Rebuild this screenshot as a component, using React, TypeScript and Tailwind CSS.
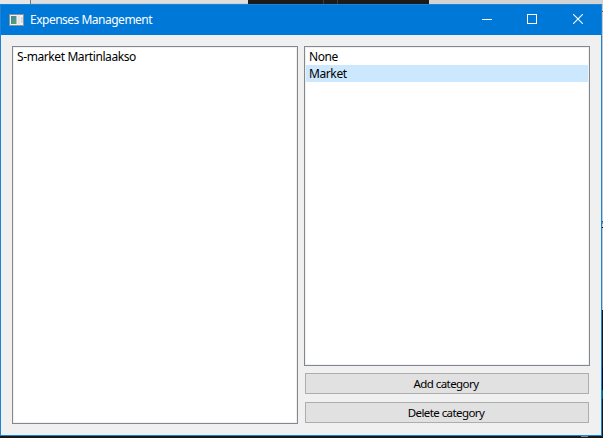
import type { ReactNode } from 'react';

function WindowIcon() {
  return (
    <svg width="16" height="13" viewBox="0 0 16 13" shapeRendering="crispEdges">
      <defs>
        <linearGradient id="pane" x1="0" y1="0" x2="0.6" y2="1">
          <stop offset="0" stopColor="#4a80a8" />
          <stop offset="1" stopColor="#55a070" />
        </linearGradient>
      </defs>
      <rect width="15" height="12" fill="#8596a3" />
      <rect x="1" y="1" width="13" height="10" fill="#eef1f3" />
      <rect x="2" y="2" width="5" height="8" fill="url(#pane)" />
      <rect x="7" y="2" width="1" height="8" fill="#a9c4c4" />
      <rect x="9" y="2" width="2" height="8" fill="#e2e5e8" />
      <rect x="12" y="3" width="2" height="6" fill="#d3dcd5" />
    </svg>
  );
}

function TitleBar() {
  return (
    <header className="flex h-[31px] shrink-0 items-center border-t border-[#1a83da] bg-[#0078d7] pl-2 text-white">
      <WindowIcon />
      <h1 className="ml-[5px] grow text-[12px] leading-[16px] tracking-[-0.5px] whitespace-nowrap">
        Expenses Management
      </h1>
      <div className="flex h-full pb-[2px]">
        <button aria-label="Minimize" className="flex w-[44px] items-center justify-center">
          <svg width="10" height="10" shapeRendering="crispEdges">
            <path d="M0 5.5H10" stroke="white" />
          </svg>
        </button>
        <button aria-label="Maximize" className="flex w-[46px] items-center justify-center">
          <svg width="10" height="10" shapeRendering="crispEdges">
            <path d="M.5 .5H9.5V9.5H.5Z" stroke="white" fill="none" />
          </svg>
        </button>
        <button aria-label="Close" className="flex w-[46px] items-center justify-center">
          <svg width="10" height="10">
            <path d="M0 0L10 10M10 0L0 10" stroke="white" strokeWidth="1.1" />
          </svg>
        </button>
      </div>
    </header>
  );
}

function ListBox({ items, selected }: { items: string[]; selected?: string }) {
  return (
    <ul className="w-[286px] grow border border-[#828790] bg-white p-px text-[12px] leading-[17px] tracking-[-0.4px] shadow-[inset_0_0_0_1px_#f0f0f0]">
      {items.map((item) => (
        <li key={item} className={`h-[17px] pl-[3px] ${item === selected ? 'bg-[#cce8ff]' : ''}`}>
          {item}
        </li>
      ))}
    </ul>
  );
}

function PushButton({ children }: { children: ReactNode }) {
  return (
    <button className="mx-px flex h-[21px] shrink-0 items-center justify-center border border-[#adadad] bg-[#e1e1e1] pr-[2px] text-[11.5px] leading-[17px] tracking-[-0.57px]">
      {children}
    </button>
  );
}

function DesktopBehind() {
  return (
    <>
      <div className="absolute inset-x-0 top-0 flex h-1">
        <div className="w-[30px] bg-[#e6e6e6]" />
        <div className="w-px bg-[#777]" />
        <div className="w-[217px] border-b border-[#cfcfcf] bg-[#dedede]" />
        <div className="w-[75px] bg-[#1b1b1b]" />
        <div className="w-[15px] border-x border-[#3c3c3c] bg-[#1b1b1b]" />
        <div className="w-[91px] bg-[#1b1b1b]" />
        <div className="grow bg-[#d3d3d3]" />
      </div>
      <div className="absolute top-1 right-0 bottom-0 flex w-px flex-col">
        <div className="h-[7px] bg-[#c4c4c4]" />
        <div className="h-px bg-[#666]" />
        <div className="h-[209px] bg-[#c9c9c9]" />
        <div className="h-px bg-[#7a4a25]" />
        <div className="h-[2px] bg-[#3da0dd]" />
        <div className="h-[3px] bg-[#c9c9c9]" />
        <div className="h-px bg-black" />
        <div className="h-[82px] bg-[#c9c9c9]" />
        <div className="h-[57px] bg-[#181818]" />
        <div className="h-[23px] bg-[#08082c]" />
        <div className="h-[9px] bg-[#075f5c]" />
        <div className="grow bg-[#181818]" />
      </div>
      <div className="absolute inset-x-0 bottom-0 h-[2px] bg-[#181818]">
        <div className="ml-[581px] h-px w-[7px] bg-[#858585]" />
      </div>
    </>
  );
}

export default function App() {
  return (
    <div className="relative h-[438px] w-[603px] overflow-hidden bg-[#181818] pt-1 font-['Noto_Sans','Open_Sans',sans-serif] text-black">
      <DesktopBehind />
      <main className="relative flex h-[432px] w-[602px] flex-col border-x border-b border-[#1a83da] bg-[#f0f0f0]">
        <TitleBar />
        <div className="flex grow gap-[6px] px-[11px] pt-[11px] pb-[11px]">
          <div className="flex flex-col">
            <ListBox items={['S-market Martinlaakso']} />
          </div>
          <div className="flex flex-col">
            <ListBox items={['None', 'Market']} selected="Market" />
            <div className="flex flex-col gap-2 pt-[7px] pb-px">
              <PushButton>Add category</PushButton>
              <PushButton>Delete category</PushButton>
            </div>
          </div>
        </div>
      </main>
    </div>
  );
}
